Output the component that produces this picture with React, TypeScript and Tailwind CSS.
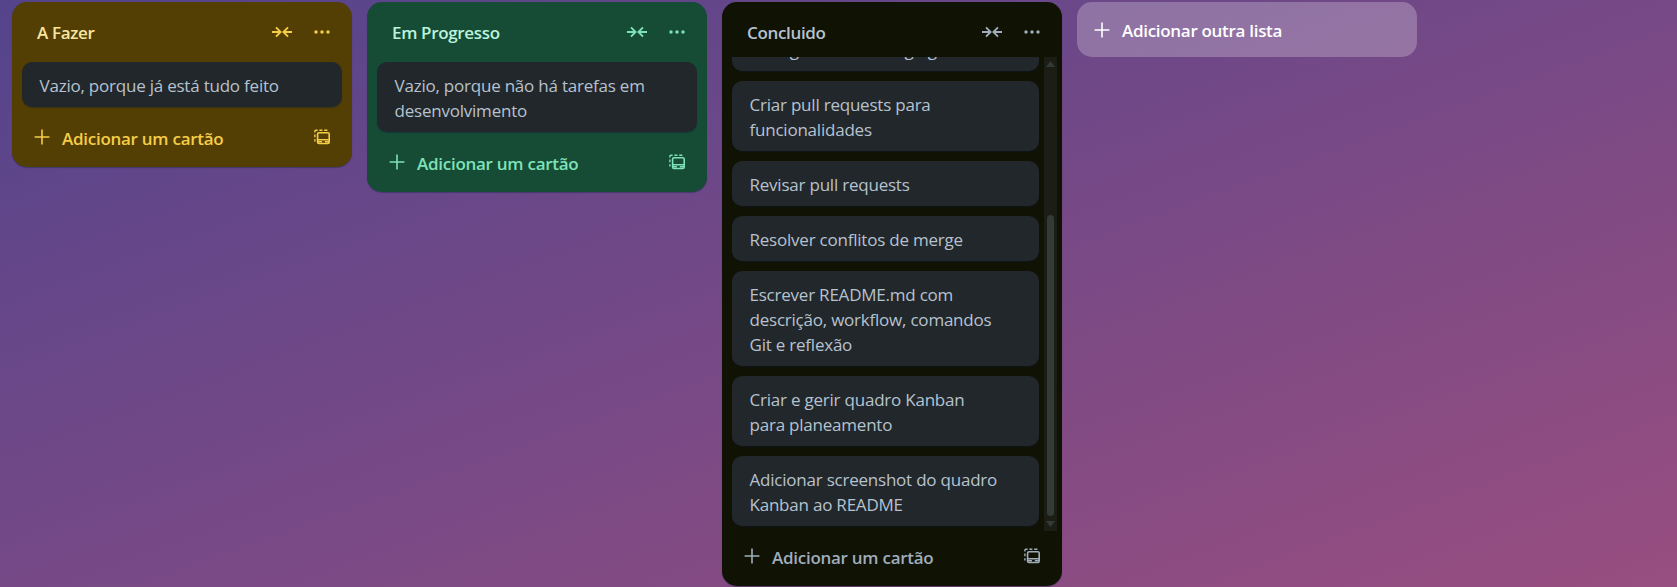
import React, { type ReactNode } from "react";

type Tone = { list: string; title: string; accent: string };

function Plus() {
  return (
    <svg width="20" height="20" viewBox="0 0 20 20" fill="none" stroke="currentColor" strokeWidth="1.6" className="shrink-0">
      <path d="M10 2.6V17.4M2.6 10H17.4" />
    </svg>
  );
}

function Collapse() {
  return (
    <svg width="20" height="12" viewBox="0 0 20 12" fill="none" stroke="currentColor" strokeWidth="1.9">
      <path d="M0 6H8.4M4 1.3L8.6 6L4 10.7M20 6H11.6M16 1.3L11.4 6L16 10.7" />
    </svg>
  );
}

function Dots() {
  return (
    <svg width="16" height="4" viewBox="0 0 16 4" fill="currentColor">
      <circle cx="2" cy="2" r="1.75" />
      <circle cx="8" cy="2" r="1.75" />
      <circle cx="14" cy="2" r="1.75" />
    </svg>
  );
}

function Template() {
  return (
    <svg width="16" height="16" viewBox="0 0 16 16" fill="none" stroke="currentColor">
      <rect x="3.6" y="3.7" width="11.6" height="10.8" rx="1.4" strokeWidth="1.6" />
      <path d="M3.6 10.7H15.2" strokeWidth="1.5" />
      <path d="M4 12.8H8M10.8 12.8H15" strokeWidth="1.6" />
      <path d="M0.9 12.6V10.2M0.9 8.2V5.4M0.9 3.6V2.2Q0.9 1.2 1.9 1.2H3.6M5.4 1.2H8.4M10.2 1.2H13.4" strokeWidth="1.4" />
    </svg>
  );
}

function Card({ lines }: { lines: string[] }) {
  return (
    <div className="shrink-0 rounded-[10px] bg-[#22272b] px-[17.5px] pt-[10.5px] pb-[9.5px] text-[17px] leading-[25px] tracking-[-0.22px] text-[#b6c2cf] shadow-[0_1px_1px_rgba(9,30,66,0.35)]">
      {lines.map((l) => (
        <div key={l} className="whitespace-nowrap">{l}</div>
      ))}
    </div>
  );
}

function List({ title, tone, children, height }: { title: string; tone: Tone; children: ReactNode; height: string }) {
  return (
    <section className={`flex w-[340px] shrink-0 flex-col overflow-hidden rounded-[15px] shadow-[0_1px_1px_rgba(9,30,66,0.35)] ${tone.list} ${height}`}>
      <header className="flex h-[55px] shrink-0 items-center pl-[25px] pr-[22px]">
        <h2 className={`grow pt-[5px] text-[17px] leading-[25px] font-semibold tracking-[-0.34px] ${tone.title}`}>{title}</h2>
        <div className={`flex items-center gap-[22px] pt-[5px] ${tone.accent}`}>
          <Collapse />
          <Dots />
        </div>
      </header>
      {children}
      <footer className={`flex h-[50px] shrink-0 items-center pl-[20px] pr-[22px] ${tone.accent}`}>
        <Plus />
        <span className="ml-[10px] grow pt-[2px] text-[17px] leading-[25px] font-semibold tracking-[-0.27px]">Adicionar um cartão</span>
        <Template />
      </footer>
    </section>
  );
}

const amber: Tone = { list: "bg-[#533f04]", title: "text-[#f8e6a0]", accent: "text-[#f5cd47]" };
const green: Tone = { list: "bg-[#164b35]", title: "text-[#baf3db]", accent: "text-[#7ee2b8]" };
const black: Tone = { list: "bg-[#101204]", title: "text-[#b6c2cf]", accent: "text-[#9fadbc]" };

const done: string[][] = [
  ["Configurar ramo staging"],
  ["Criar pull requests para", "funcionalidades"],
  ["Revisar pull requests"],
  ["Resolver conflitos de merge"],
  ["Escrever README.md com", "descrição, workflow, comandos", "Git e reflexão"],
  ["Criar e gerir quadro Kanban", "para planeamento"],
  ["Adicionar screenshot do quadro", "Kanban ao README"],
];

export default function App() {
  return (
    <main className="flex h-[587px] w-full items-start gap-[15px] overflow-hidden bg-linear-[160deg,#54448c_0%,#984e80_100%] pl-[12px] pt-[2px] font-['Open_Sans','Noto_Sans',sans-serif]">
      <List title="A Fazer" tone={amber} height="h-[165px]">
        <div className="flex shrink-0 flex-col px-[10px] py-[5px]">
          <Card lines={["Vazio, porque já está tudo feito"]} />
        </div>
      </List>
      <List title="Em Progresso" tone={green} height="h-[190px]">
        <div className="flex shrink-0 flex-col px-[10px] py-[5px]">
          <Card lines={["Vazio, porque não há tarefas em", "desenvolvimento"]} />
        </div>
      </List>
      <List title="Concluido" tone={black} height="h-[584px]">
        <div className="flex h-[474px] shrink-0 pl-[10px] pr-[5px]">
          <div className="flex grow flex-col justify-end gap-[10px] overflow-hidden pb-[5px]">
            {done.map((lines) => (
              <Card key={lines[0]} lines={lines} />
            ))}
          </div>
          <div className="ml-[5px] flex w-[13px] shrink-0 flex-col items-center bg-[#1c1e15] py-[4px] text-[#323b37]">
            <svg width="9" height="6" viewBox="0 0 9 6" fill="currentColor"><path d="M0 6L4.5 0L9 6Z" /></svg>
            <div className="mt-[148px] h-[301px] w-[7px] rounded-full bg-[#323b37]" />
            <svg className="mt-auto" width="9" height="6" viewBox="0 0 9 6" fill="currentColor"><path d="M0 0L4.5 6L9 0Z" /></svg>
          </div>
        </div>
      </List>
      <button className="flex h-[55px] w-[340px] shrink-0 items-center rounded-[15px] bg-white/24 pl-[15px] text-white">
        <Plus />
        <span className="ml-[10px] pt-[2px] text-[17px] leading-[25px] font-semibold tracking-[-0.3px]">Adicionar outra lista</span>
      </button>
    </main>
  );
}
